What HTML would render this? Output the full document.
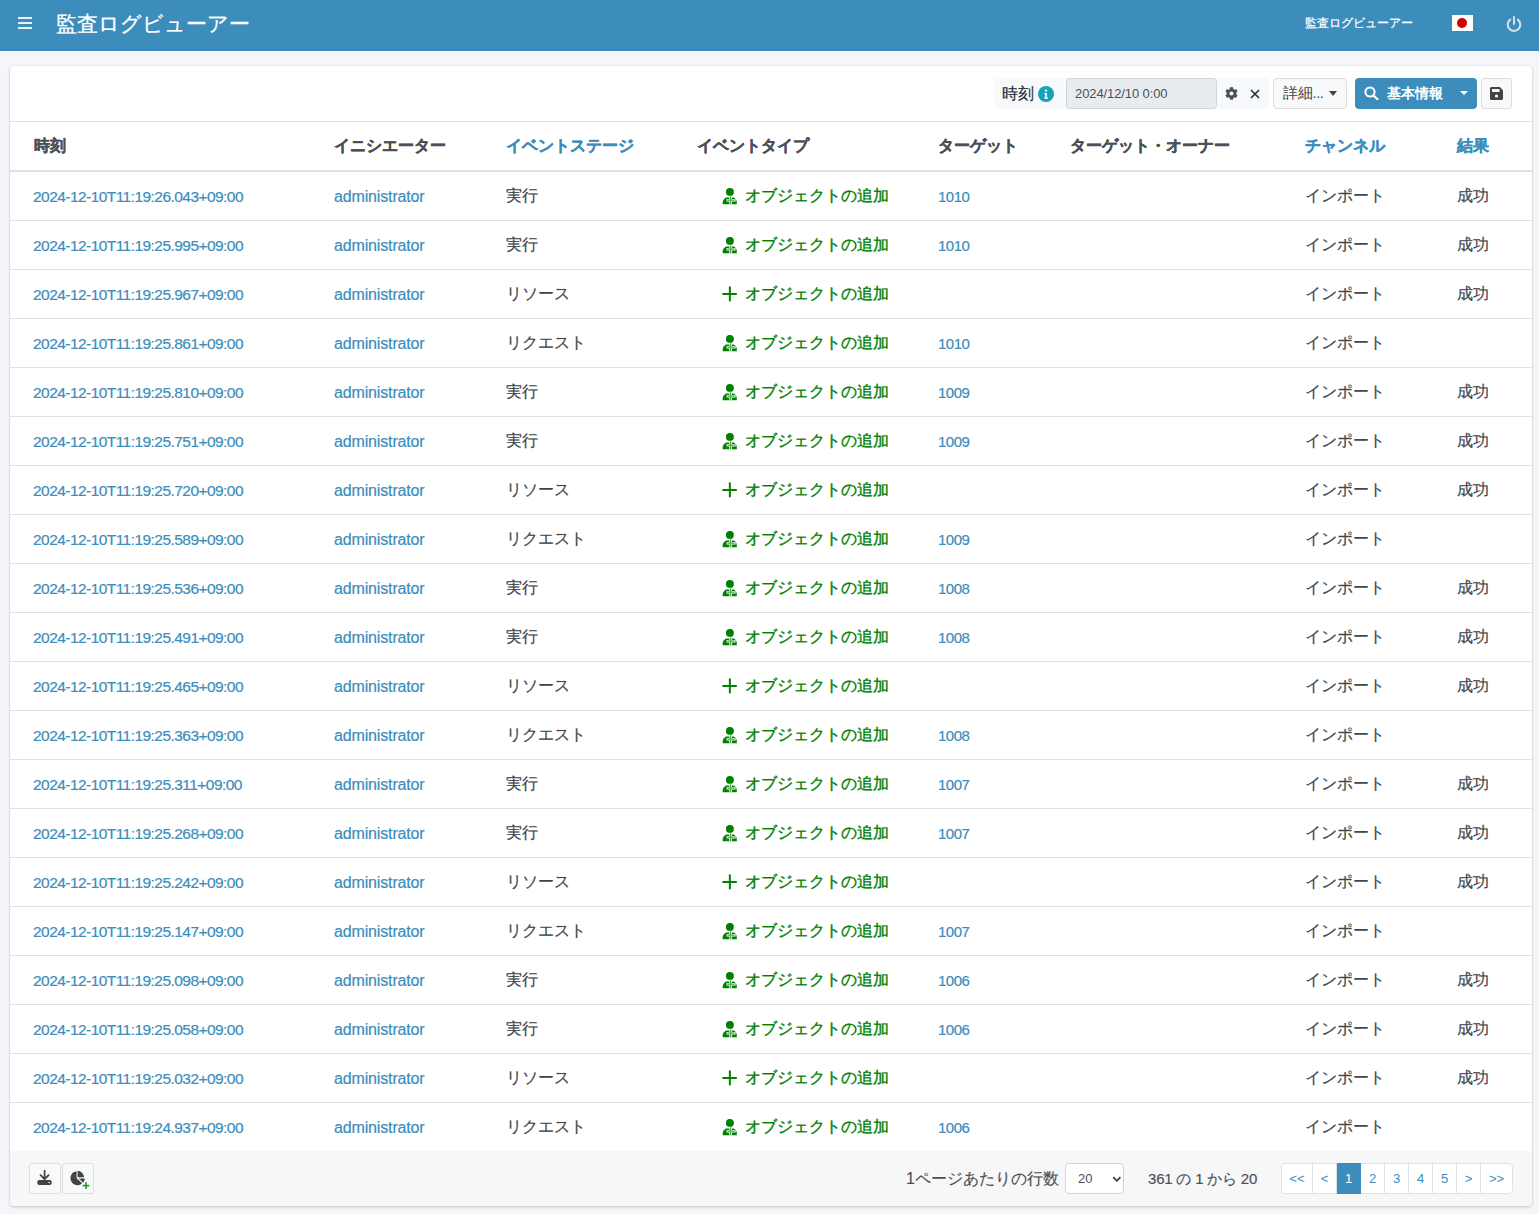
<!DOCTYPE html><html lang="ja"><head><meta charset="utf-8"><title>監査ログビューアー</title><style>
*{box-sizing:border-box}
html,body{margin:0;padding:0}
body{width:1539px;height:1214px;overflow:hidden;background:#f4f6f9;font-family:"Liberation Sans",sans-serif;color:#212529;position:relative}
.hdr{position:absolute;left:0;top:0;width:1539px;height:51px;background:#3c8dbc;border-bottom:1px solid #3689bf}
.hdr .burger{position:absolute;left:18px;top:17px;width:14px;height:12px}
.hdr .burger i{position:absolute;left:0;width:14px;height:2px;background:#eaf2f8}
.hdr .title{position:absolute;left:56px;top:9px;font-size:21px;-webkit-text-stroke:0.3px #fff;line-height:30px;color:#fff;white-space:nowrap}
.hdr .stitle{position:absolute;left:1305px;top:15px;font-size:11.5px;-webkit-text-stroke:0.25px #fff;line-height:16px;color:#fff;white-space:nowrap}
.hdr .flag{position:absolute;left:1452px;top:15px;width:21px;height:16px;background:#fff}
.hdr .flag i{position:absolute;left:5px;top:3px;width:10px;height:10px;border-radius:50%;background:#d30000}
.hdr .power{position:absolute;left:1505px;top:14.5px;width:18px;height:18px}
.card{position:absolute;left:10px;top:66px;width:1522px;height:1140px;background:#fff;border-radius:4px;box-shadow:0 0 1px rgba(0,0,0,.125),0 1px 3px rgba(0,0,0,.2);overflow:hidden}
.tb{position:absolute;left:0;top:0;width:1522px;height:57px;border-bottom:1px solid #dee2e6}
.thead{position:absolute;left:0;top:57px;width:1522px;height:50px;border-bottom:2px solid #dee2e6}
.h{position:absolute;top:14px;font-size:16px;line-height:20px;font-weight:bold;color:#495057;white-space:nowrap;-webkit-text-stroke:0.3px currentColor}
.lnk{color:#3c8dbc}
.c1{left:24px}.c2{left:324px}.c3{left:496px}.c4{left:687px}.c5{left:928px}.c6{left:1060px}.c7{left:1295px}.c8{left:1447px}
.tr{position:relative;height:49px;border-bottom:1px solid #dee2e6}
.tbody{position:absolute;left:0;top:107px;width:1522px}
.tr span{position:absolute;top:14px;line-height:20px;white-space:nowrap}
.ts{left:23px;top:15px!important;font-size:15.5px;color:#3c8dbc;letter-spacing:-0.55px;-webkit-text-stroke:0.2px #3c8dbc}
.adm{left:324px;top:15px!important;font-size:16px;color:#3c8dbc;letter-spacing:-0.15px;-webkit-text-stroke:0.2px #3c8dbc}
.st{left:496px;font-size:16px;color:#3f464e;-webkit-text-stroke:0.2px #3f464e}
.et{left:735px;font-size:16px;color:#008000;-webkit-text-stroke:0.35px #008000}
.tg{left:928px;top:15px!important;font-size:15px;color:#3c8dbc;letter-spacing:-0.5px;-webkit-text-stroke:0.2px #3c8dbc}
.ch{left:1295px;font-size:16px;color:#3f464e;-webkit-text-stroke:0.2px #3f464e}
.rs{left:1447px;font-size:16px;color:#3f464e;-webkit-text-stroke:0.2px #3f464e}
.tr svg{position:absolute;left:712px;top:16px}
.ftr{position:absolute;left:0;top:1086px;width:1522px;height:55px;background:#f7f7f7}
.grp{position:absolute;left:984px;top:13px;width:275px;height:31px;background:#f8f9fa;border-radius:4px}
.tlabel{position:absolute;left:992px;top:19px;-webkit-text-stroke:0.2px #1f2d3d;font-size:16px;line-height:20px;color:#1f2d3d;white-space:nowrap}
.info{position:absolute;left:1028px;top:21px}
.inp{position:absolute;left:1056px;top:13px;width:151px;height:31px;background:#e9ecef;border:1px solid #ced4da;border-radius:4px;font-size:13px;line-height:30px;padding-left:8px;color:#495057;letter-spacing:-0.1px;white-space:nowrap}
.gear{position:absolute;left:1215px;top:22px}
.xic{position:absolute;left:1240px;top:24px}
.bdet{position:absolute;left:1263px;top:13px;width:74px;height:31px;background:#f8f9fa;border:1px solid #ddd;border-radius:4px}
.bdet span{position:absolute;left:9px;top:4px;font-size:14.5px;letter-spacing:-0.3px;line-height:20px;color:#444;white-space:nowrap}
.caret{position:absolute;width:0;height:0;border-left:4.5px solid transparent;border-right:4.5px solid transparent;border-top:5px solid #444}
.bdet .caret{left:55px;top:12px}
.bblue{position:absolute;left:1345px;top:13px;width:122px;height:31px;background:#3c8dbc;border-radius:4px}
.bblue svg{position:absolute;left:9px;top:7.5px}
.bblue span{position:absolute;left:32px;top:5px;font-size:14px;line-height:20px;color:#fff;font-weight:bold;white-space:nowrap}
.bblue .caret{left:105px;top:13px;border-top-color:#fff;border-left-width:4px;border-right-width:4px;border-top-width:4px}
.bsave{position:absolute;left:1471px;top:13px;width:31px;height:31px;background:#f8f9fa;border:1px solid #ddd;border-radius:3px}
.bsave svg{position:absolute;left:8px;top:7.5px}
.fb{position:absolute;top:12px;width:33px;height:31px;background:#f8f9fa;border:1px solid #ddd;border-radius:3px}
.fb svg{position:absolute;left:7px;top:6px}
.fb2 svg{left:7.5px;top:6px}
.flabel{position:absolute;left:896px;top:18px;-webkit-text-stroke:0.15px #495057;font-size:16px;line-height:20px;color:#495057;white-space:nowrap}
.sel{position:absolute;left:1055px;top:12px;width:59px;height:31px;background:#fff;border:1px solid #ced4da;border-radius:4px}
.sel span{position:absolute;left:12px;top:7px;font-size:13px;line-height:16px;color:#495057}
.sel svg{position:absolute;left:45.5px;top:11.5px}
.fcount{position:absolute;left:1138px;top:18px;-webkit-text-stroke:0.15px #495057;font-size:15px;letter-spacing:-0.2px;line-height:20px;color:#495057;white-space:nowrap}
.pg{position:absolute;left:1271px;top:12px;height:31px;background:#fff;border:1px solid #dee2e6;border-radius:4px;display:flex;overflow:visible}
.pg span{display:block;height:29px;line-height:29px;text-align:center;font-size:13px;color:#3c8dbc;border-right:1px solid #dee2e6}
.pg span.act{background:#3c8dbc;color:#fff;border-right-color:#3c8dbc;height:31px;margin-top:-1px;line-height:31px}

.inner{position:absolute;left:0;top:-1px;width:1522px;height:1141px}

</style></head><body>
<div class="hdr"><div class="burger"><i style="top:0"></i><i style="top:5px"></i><i style="top:10px"></i></div>
<div class="title">監査ログビューアー</div><div class="stitle">監査ログビューアー</div>
<div class="flag"><i></i></div>
<svg class="power" viewBox="0 0 18 18"><path d="M9 2v7" stroke="#d5e4ef" stroke-width="2" stroke-linecap="round" fill="none"/><path d="M5.2 4.6A6.3 6.3 0 1 0 12.8 4.6" stroke="#d5e4ef" stroke-width="2" fill="none" stroke-linecap="round"/></svg>
</div>
<div class="card"><div class="inner">
<div class="tb">
<div class="grp"></div>
<span class="tlabel">時刻</span>
<svg class="info" width="16" height="16" viewBox="0 0 16 16"><circle cx="8" cy="8" r="8" fill="#17a2b8"/><circle cx="8" cy="4.6" r="1.2" fill="#fff"/><path d="M6.3 7h2.6v4.6h1v1.2H6.2v-1.2h1V8.2h-.9z" fill="#fff"/></svg>
<div class="inp">2024/12/10 0:00</div>
<svg class="gear" width="13" height="13" viewBox="0 0 512 512"><path fill="#495057" d="M487.4 315.7l-42.6-24.6c4.3-23.2 4.3-47 0-70.2l42.6-24.6c4.900-2.800 7.100-8.600 5.500-14-11.100-35.600-30-67.800-54.700-94.600-3.800-4.100-10-5.100-14.800-2.300L380.800 110c-17.900-15.400-38.500-27.300-60.800-35.100V25.800c0-5.600-3.900-10.500-9.400-11.700-36.700-8.200-74.300-7.800-109.200 0-5.500 1.200-9.400 6.100-9.400 11.700V75c-22.200 7.900-42.800 19.800-60.800 35.100L88.700 85.500c-4.900-2.800-11-1.900-14.800 2.300-24.700 26.700-43.600 58.900-54.700 94.600-1.700 5.400.600 11.200 5.500 14L67.300 221c-4.300 23.200-4.300 47 0 70.200l-42.600 24.600c-4.900 2.800-7.100 8.600-5.500 14 11.100 35.600 30 67.800 54.700 94.600 3.800 4.100 10 5.100 14.800 2.300l42.600-24.600c17.900 15.400 38.500 27.300 60.800 35.100v49.200c0 5.600 3.900 10.500 9.400 11.700 36.700 8.200 74.300 7.800 109.200 0 5.500-1.200 9.400-6.100 9.400-11.700v-49.200c22.200-7.900 42.800-19.800 60.800-35.100l42.600 24.600c4.900 2.800 11 1.900 14.800-2.300 24.700-26.700 43.600-58.900 54.700-94.600 1.500-5.500-.7-11.300-5.600-14.100zM256 336c-44.100 0-80-35.900-80-80s35.900-80 80-80 80 35.900 80 80-35.900 80-80 80z"/></svg>
<svg class="xic" width="10" height="10" viewBox="0 0 10 10"><path d="M1 1L9 9M9 1L1 9" stroke="#1f2d3d" stroke-width="1.6"/></svg>
<div class="bdet"><span>詳細...</span><i class="caret"></i></div>
<div class="bblue"><svg width="15" height="14" viewBox="0 0 15 14"><circle cx="6" cy="6" r="4.6" stroke="#fff" stroke-width="2" fill="none"/><path d="M9.3 9.3L13.5 13.3" stroke="#fff" stroke-width="2.2" stroke-linecap="round"/></svg><span>基本情報</span><i class="caret w"></i></div>
<div class="bsave"><svg width="13" height="13" viewBox="0 0 13 13"><path d="M1.5 0h8.3L13 3.2v8.3c0 .8-.7 1.5-1.5 1.5h-10C.7 13 0 12.3 0 11.5v-10C0 .7.7 0 1.5 0z" fill="#444"/><rect x="2" y="2" width="7.5" height="3" fill="#f8f9fa"/><circle cx="6.5" cy="9" r="1.6" fill="#f8f9fa"/></svg></div>
</div>
<div class="thead"><span class="h c1">時刻</span><span class="h c2">イニシエーター</span><span class="h c3 lnk">イベントステージ</span><span class="h c4">イベントタイプ</span><span class="h c5">ターゲット</span><span class="h c6">ターゲット・オーナー</span><span class="h c7 lnk">チャンネル</span><span class="h c8 lnk">結果</span></div>
<div class="tbody">
<div class="tr"><span class="ts">2024-12-10T11:19:26.043+09:00</span><span class="adm">administrator</span><span class="st">実行</span><svg width="16" height="17" viewBox="0 0 16 17"><circle cx="7.9" cy="3.9" r="3.95" fill="#008000"/><path d="M0.7 16.2v-1.6c0-2.9 2.300-5 5-5h4.600c2.700 0 4.500 2.100 4.500 5v1.600z" fill="#008000"/><path d="M8.6 8v9M4.6 12.2h9" stroke="#fff" stroke-width="2.6"/><path d="M8.6 8.3v8.2M5.3 12.2h7.5" stroke="#4da64d" stroke-width="1.2"/></svg><span class="et">オブジェクトの追加</span><span class="tg">1010</span><span class="ch">インポート</span><span class="rs">成功</span></div>
<div class="tr"><span class="ts">2024-12-10T11:19:25.995+09:00</span><span class="adm">administrator</span><span class="st">実行</span><svg width="16" height="17" viewBox="0 0 16 17"><circle cx="7.9" cy="3.9" r="3.95" fill="#008000"/><path d="M0.7 16.2v-1.6c0-2.9 2.300-5 5-5h4.600c2.700 0 4.500 2.100 4.500 5v1.600z" fill="#008000"/><path d="M8.6 8v9M4.6 12.2h9" stroke="#fff" stroke-width="2.6"/><path d="M8.6 8.3v8.2M5.3 12.2h7.5" stroke="#4da64d" stroke-width="1.2"/></svg><span class="et">オブジェクトの追加</span><span class="tg">1010</span><span class="ch">インポート</span><span class="rs">成功</span></div>
<div class="tr"><span class="ts">2024-12-10T11:19:25.967+09:00</span><span class="adm">administrator</span><span class="st">リソース</span><svg width="16" height="16" viewBox="0 0 16 16"><path d="M7.85 1.3v13.1M1.2 8h12.9" stroke="#008000" stroke-width="2" stroke-linecap="round"/></svg><span class="et">オブジェクトの追加</span><span class="tg"></span><span class="ch">インポート</span><span class="rs">成功</span></div>
<div class="tr"><span class="ts">2024-12-10T11:19:25.861+09:00</span><span class="adm">administrator</span><span class="st">リクエスト</span><svg width="16" height="17" viewBox="0 0 16 17"><circle cx="7.9" cy="3.9" r="3.95" fill="#008000"/><path d="M0.7 16.2v-1.6c0-2.9 2.300-5 5-5h4.600c2.700 0 4.500 2.100 4.500 5v1.600z" fill="#008000"/><path d="M8.6 8v9M4.6 12.2h9" stroke="#fff" stroke-width="2.6"/><path d="M8.6 8.3v8.2M5.3 12.2h7.5" stroke="#4da64d" stroke-width="1.2"/></svg><span class="et">オブジェクトの追加</span><span class="tg">1010</span><span class="ch">インポート</span><span class="rs"></span></div>
<div class="tr"><span class="ts">2024-12-10T11:19:25.810+09:00</span><span class="adm">administrator</span><span class="st">実行</span><svg width="16" height="17" viewBox="0 0 16 17"><circle cx="7.9" cy="3.9" r="3.95" fill="#008000"/><path d="M0.7 16.2v-1.6c0-2.9 2.300-5 5-5h4.600c2.700 0 4.500 2.100 4.500 5v1.600z" fill="#008000"/><path d="M8.6 8v9M4.6 12.2h9" stroke="#fff" stroke-width="2.6"/><path d="M8.6 8.3v8.2M5.3 12.2h7.5" stroke="#4da64d" stroke-width="1.2"/></svg><span class="et">オブジェクトの追加</span><span class="tg">1009</span><span class="ch">インポート</span><span class="rs">成功</span></div>
<div class="tr"><span class="ts">2024-12-10T11:19:25.751+09:00</span><span class="adm">administrator</span><span class="st">実行</span><svg width="16" height="17" viewBox="0 0 16 17"><circle cx="7.9" cy="3.9" r="3.95" fill="#008000"/><path d="M0.7 16.2v-1.6c0-2.9 2.300-5 5-5h4.600c2.700 0 4.500 2.100 4.500 5v1.600z" fill="#008000"/><path d="M8.6 8v9M4.6 12.2h9" stroke="#fff" stroke-width="2.6"/><path d="M8.6 8.3v8.2M5.3 12.2h7.5" stroke="#4da64d" stroke-width="1.2"/></svg><span class="et">オブジェクトの追加</span><span class="tg">1009</span><span class="ch">インポート</span><span class="rs">成功</span></div>
<div class="tr"><span class="ts">2024-12-10T11:19:25.720+09:00</span><span class="adm">administrator</span><span class="st">リソース</span><svg width="16" height="16" viewBox="0 0 16 16"><path d="M7.85 1.3v13.1M1.2 8h12.9" stroke="#008000" stroke-width="2" stroke-linecap="round"/></svg><span class="et">オブジェクトの追加</span><span class="tg"></span><span class="ch">インポート</span><span class="rs">成功</span></div>
<div class="tr"><span class="ts">2024-12-10T11:19:25.589+09:00</span><span class="adm">administrator</span><span class="st">リクエスト</span><svg width="16" height="17" viewBox="0 0 16 17"><circle cx="7.9" cy="3.9" r="3.95" fill="#008000"/><path d="M0.7 16.2v-1.6c0-2.9 2.300-5 5-5h4.600c2.700 0 4.500 2.100 4.500 5v1.600z" fill="#008000"/><path d="M8.6 8v9M4.6 12.2h9" stroke="#fff" stroke-width="2.6"/><path d="M8.6 8.3v8.2M5.3 12.2h7.5" stroke="#4da64d" stroke-width="1.2"/></svg><span class="et">オブジェクトの追加</span><span class="tg">1009</span><span class="ch">インポート</span><span class="rs"></span></div>
<div class="tr"><span class="ts">2024-12-10T11:19:25.536+09:00</span><span class="adm">administrator</span><span class="st">実行</span><svg width="16" height="17" viewBox="0 0 16 17"><circle cx="7.9" cy="3.9" r="3.95" fill="#008000"/><path d="M0.7 16.2v-1.6c0-2.9 2.300-5 5-5h4.600c2.700 0 4.500 2.100 4.500 5v1.600z" fill="#008000"/><path d="M8.6 8v9M4.6 12.2h9" stroke="#fff" stroke-width="2.6"/><path d="M8.6 8.3v8.2M5.3 12.2h7.5" stroke="#4da64d" stroke-width="1.2"/></svg><span class="et">オブジェクトの追加</span><span class="tg">1008</span><span class="ch">インポート</span><span class="rs">成功</span></div>
<div class="tr"><span class="ts">2024-12-10T11:19:25.491+09:00</span><span class="adm">administrator</span><span class="st">実行</span><svg width="16" height="17" viewBox="0 0 16 17"><circle cx="7.9" cy="3.9" r="3.95" fill="#008000"/><path d="M0.7 16.2v-1.6c0-2.9 2.300-5 5-5h4.600c2.700 0 4.500 2.100 4.500 5v1.600z" fill="#008000"/><path d="M8.6 8v9M4.6 12.2h9" stroke="#fff" stroke-width="2.6"/><path d="M8.6 8.3v8.2M5.3 12.2h7.5" stroke="#4da64d" stroke-width="1.2"/></svg><span class="et">オブジェクトの追加</span><span class="tg">1008</span><span class="ch">インポート</span><span class="rs">成功</span></div>
<div class="tr"><span class="ts">2024-12-10T11:19:25.465+09:00</span><span class="adm">administrator</span><span class="st">リソース</span><svg width="16" height="16" viewBox="0 0 16 16"><path d="M7.85 1.3v13.1M1.2 8h12.9" stroke="#008000" stroke-width="2" stroke-linecap="round"/></svg><span class="et">オブジェクトの追加</span><span class="tg"></span><span class="ch">インポート</span><span class="rs">成功</span></div>
<div class="tr"><span class="ts">2024-12-10T11:19:25.363+09:00</span><span class="adm">administrator</span><span class="st">リクエスト</span><svg width="16" height="17" viewBox="0 0 16 17"><circle cx="7.9" cy="3.9" r="3.95" fill="#008000"/><path d="M0.7 16.2v-1.6c0-2.9 2.300-5 5-5h4.600c2.700 0 4.500 2.100 4.500 5v1.600z" fill="#008000"/><path d="M8.6 8v9M4.6 12.2h9" stroke="#fff" stroke-width="2.6"/><path d="M8.6 8.3v8.2M5.3 12.2h7.5" stroke="#4da64d" stroke-width="1.2"/></svg><span class="et">オブジェクトの追加</span><span class="tg">1008</span><span class="ch">インポート</span><span class="rs"></span></div>
<div class="tr"><span class="ts">2024-12-10T11:19:25.311+09:00</span><span class="adm">administrator</span><span class="st">実行</span><svg width="16" height="17" viewBox="0 0 16 17"><circle cx="7.9" cy="3.9" r="3.95" fill="#008000"/><path d="M0.7 16.2v-1.6c0-2.9 2.300-5 5-5h4.600c2.700 0 4.500 2.100 4.500 5v1.600z" fill="#008000"/><path d="M8.6 8v9M4.6 12.2h9" stroke="#fff" stroke-width="2.6"/><path d="M8.6 8.3v8.2M5.3 12.2h7.5" stroke="#4da64d" stroke-width="1.2"/></svg><span class="et">オブジェクトの追加</span><span class="tg">1007</span><span class="ch">インポート</span><span class="rs">成功</span></div>
<div class="tr"><span class="ts">2024-12-10T11:19:25.268+09:00</span><span class="adm">administrator</span><span class="st">実行</span><svg width="16" height="17" viewBox="0 0 16 17"><circle cx="7.9" cy="3.9" r="3.95" fill="#008000"/><path d="M0.7 16.2v-1.6c0-2.9 2.300-5 5-5h4.600c2.700 0 4.500 2.100 4.500 5v1.600z" fill="#008000"/><path d="M8.6 8v9M4.6 12.2h9" stroke="#fff" stroke-width="2.6"/><path d="M8.6 8.3v8.2M5.3 12.2h7.5" stroke="#4da64d" stroke-width="1.2"/></svg><span class="et">オブジェクトの追加</span><span class="tg">1007</span><span class="ch">インポート</span><span class="rs">成功</span></div>
<div class="tr"><span class="ts">2024-12-10T11:19:25.242+09:00</span><span class="adm">administrator</span><span class="st">リソース</span><svg width="16" height="16" viewBox="0 0 16 16"><path d="M7.85 1.3v13.1M1.2 8h12.9" stroke="#008000" stroke-width="2" stroke-linecap="round"/></svg><span class="et">オブジェクトの追加</span><span class="tg"></span><span class="ch">インポート</span><span class="rs">成功</span></div>
<div class="tr"><span class="ts">2024-12-10T11:19:25.147+09:00</span><span class="adm">administrator</span><span class="st">リクエスト</span><svg width="16" height="17" viewBox="0 0 16 17"><circle cx="7.9" cy="3.9" r="3.95" fill="#008000"/><path d="M0.7 16.2v-1.6c0-2.9 2.300-5 5-5h4.600c2.700 0 4.500 2.100 4.500 5v1.600z" fill="#008000"/><path d="M8.6 8v9M4.6 12.2h9" stroke="#fff" stroke-width="2.6"/><path d="M8.6 8.3v8.2M5.3 12.2h7.5" stroke="#4da64d" stroke-width="1.2"/></svg><span class="et">オブジェクトの追加</span><span class="tg">1007</span><span class="ch">インポート</span><span class="rs"></span></div>
<div class="tr"><span class="ts">2024-12-10T11:19:25.098+09:00</span><span class="adm">administrator</span><span class="st">実行</span><svg width="16" height="17" viewBox="0 0 16 17"><circle cx="7.9" cy="3.9" r="3.95" fill="#008000"/><path d="M0.7 16.2v-1.6c0-2.9 2.300-5 5-5h4.600c2.700 0 4.500 2.100 4.500 5v1.600z" fill="#008000"/><path d="M8.6 8v9M4.6 12.2h9" stroke="#fff" stroke-width="2.6"/><path d="M8.6 8.3v8.2M5.3 12.2h7.5" stroke="#4da64d" stroke-width="1.2"/></svg><span class="et">オブジェクトの追加</span><span class="tg">1006</span><span class="ch">インポート</span><span class="rs">成功</span></div>
<div class="tr"><span class="ts">2024-12-10T11:19:25.058+09:00</span><span class="adm">administrator</span><span class="st">実行</span><svg width="16" height="17" viewBox="0 0 16 17"><circle cx="7.9" cy="3.9" r="3.95" fill="#008000"/><path d="M0.7 16.2v-1.6c0-2.9 2.300-5 5-5h4.600c2.700 0 4.500 2.100 4.500 5v1.600z" fill="#008000"/><path d="M8.6 8v9M4.6 12.2h9" stroke="#fff" stroke-width="2.6"/><path d="M8.6 8.3v8.2M5.3 12.2h7.5" stroke="#4da64d" stroke-width="1.2"/></svg><span class="et">オブジェクトの追加</span><span class="tg">1006</span><span class="ch">インポート</span><span class="rs">成功</span></div>
<div class="tr"><span class="ts">2024-12-10T11:19:25.032+09:00</span><span class="adm">administrator</span><span class="st">リソース</span><svg width="16" height="16" viewBox="0 0 16 16"><path d="M7.85 1.3v13.1M1.2 8h12.9" stroke="#008000" stroke-width="2" stroke-linecap="round"/></svg><span class="et">オブジェクトの追加</span><span class="tg"></span><span class="ch">インポート</span><span class="rs">成功</span></div>
<div class="tr last"><span class="ts">2024-12-10T11:19:24.937+09:00</span><span class="adm">administrator</span><span class="st">リクエスト</span><svg width="16" height="17" viewBox="0 0 16 17"><circle cx="7.9" cy="3.9" r="3.95" fill="#008000"/><path d="M0.7 16.2v-1.6c0-2.9 2.300-5 5-5h4.600c2.700 0 4.500 2.100 4.500 5v1.600z" fill="#008000"/><path d="M8.6 8v9M4.6 12.2h9" stroke="#fff" stroke-width="2.6"/><path d="M8.6 8.3v8.2M5.3 12.2h7.5" stroke="#4da64d" stroke-width="1.2"/></svg><span class="et">オブジェクトの追加</span><span class="tg">1006</span><span class="ch">インポート</span><span class="rs"></span></div>
</div>
<div class="ftr">
<div class="fb" style="left:19px;width:32px"><svg width="16" height="16" viewBox="0 0 16 16"><path d="M7.6 0.8v8.2M3.6 5.2l4 4 4-4" stroke="#444" stroke-width="1.8" fill="none" stroke-linecap="round"/><rect x="0.3" y="10.1" width="14.4" height="4.9" rx="2" fill="#444"/><circle cx="12.1" cy="12.5" r="0.8" fill="#f8f9fa"/></svg></div>
<div class="fb fb2" style="left:51.5px;width:32px"><svg width="22" height="22" viewBox="0 0 22 22"><path d="M6.6 1.2A7 7 0 1 0 12.2 13.3L6.6 8.2z" fill="#444"/><path d="M7.6 0.8A6.8 6.8 0 0 1 14 7.2H7.6z" fill="#444"/><path d="M8.8 8.6H14.9A7 7 0 0 1 13.2 12.7z" fill="#444"/><path d="M16 11.9v7.4M12.3 15.6h7.4" stroke="#fff" stroke-width="3.2"/><path d="M16 12.2v6.8M12.6 15.6h6.8" stroke="#22a022" stroke-width="1.7"/></svg></div>
<span class="flabel">1ページあたりの行数</span>
<div class="sel"><span>20</span><svg width="10" height="7" viewBox="0 0 10 7"><path d="M1.2 1.2l3.6 3.6 3.6-3.6" stroke="#343a40" stroke-width="1.7" fill="none"/></svg></div>
<span class="fcount">361 の 1 から 20</span>
<div class="pg"><span style="width:31px">&lt;&lt;</span><span style="width:24px">&lt;</span><span class="act" style="width:24px">1</span><span style="width:24px">2</span><span style="width:24px">3</span><span style="width:24px">4</span><span style="width:24px">5</span><span style="width:24px">&gt;</span><span style="width:31px;border-right:0">&gt;&gt;</span></div>
</div>
</div></div></body></html>
